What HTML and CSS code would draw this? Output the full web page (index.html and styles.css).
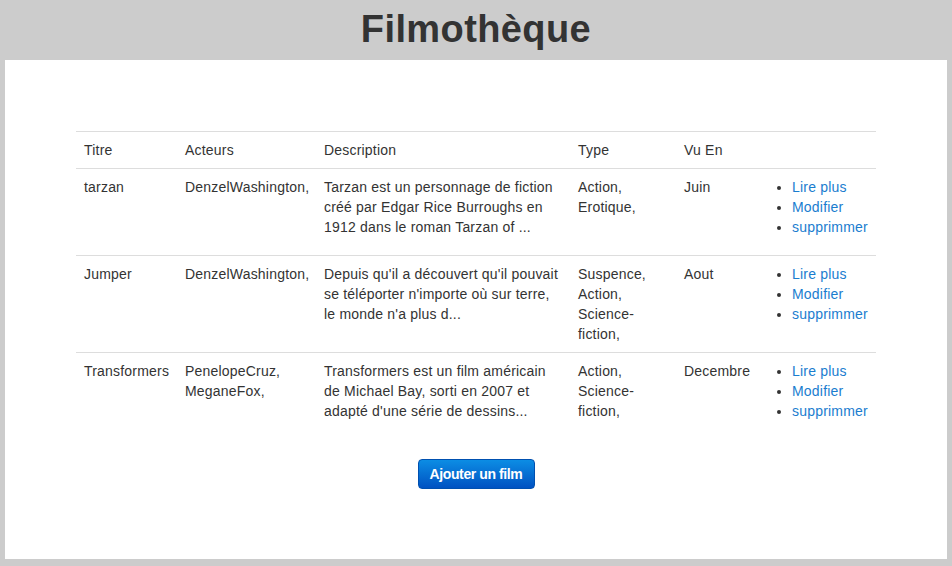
FILE: index.html
```html
<!DOCTYPE html>
<html lang="fr">
<head>
<meta charset="utf-8">
<title>Filmothèque</title>
<link rel="stylesheet" href="styles.css">
</head>
<body>
<header class="top">
  <h1 class="title">Filmothèque</h1>
</header>
<main class="panel">
  <table class="films">
    <colgroup>
      <col class="c-titre"><col class="c-acteurs"><col class="c-desc"><col class="c-type"><col class="c-vu"><col class="c-actions">
    </colgroup>
    <thead>
      <tr><th>Titre</th><th>Acteurs</th><th>Description</th><th>Type</th><th>Vu En</th><th></th></tr>
    </thead>
    <tbody>
      <tr>
        <td>tarzan</td>
        <td>DenzelWashington,</td>
        <td>Tarzan est un personnage de fiction créé par Edgar Rice Burroughs en 1912 dans le roman Tarzan of ...</td>
        <td>Action,<br>Erotique,</td>
        <td>Juin</td>
        <td><ul class="acts"><li><a href="#">Lire plus</a></li><li><a href="#">Modifier</a></li><li><a href="#">supprimmer</a></li></ul></td>
      </tr>
      <tr>
        <td>Jumper</td>
        <td>DenzelWashington,</td>
        <td>Depuis qu'il a découvert qu'il pouvait se téléporter n'importe où sur terre, le monde n'a plus d...</td>
        <td>Suspence,<br>Action,<br>Science-fiction,</td>
        <td>Aout</td>
        <td><ul class="acts"><li><a href="#">Lire plus</a></li><li><a href="#">Modifier</a></li><li><a href="#">supprimmer</a></li></ul></td>
      </tr>
      <tr>
        <td>Transformers</td>
        <td>PenelopeCruz,<br>MeganeFox,</td>
        <td>Transformers est un film américain de Michael Bay, sorti en 2007 et adapté d'une série de dessins...</td>
        <td>Action,<br>Science-fiction,</td>
        <td>Decembre</td>
        <td><ul class="acts"><li><a href="#">Lire plus</a></li><li><a href="#">Modifier</a></li><li><a href="#">supprimmer</a></li></ul></td>
      </tr>
    </tbody>
  </table>
  <div class="actions-bar">
    <a class="btn" href="#">Ajouter un film</a>
  </div>
</main>
</body>
</html>
```
FILE: styles.css
```css
html, body {
  margin: 0;
  padding: 0;
}
body {
  background: #cccccc;
  font-family: "Liberation Sans", Arial, Helvetica, sans-serif;
  font-size: 14px;
  line-height: 20px;
  color: #333333;
}
.top {
  height: 60px;
}
.title {
  margin: 0;
  text-align: center;
  font-size: 38px;
  line-height: 58px;
  font-weight: bold;
  color: #333333;
  letter-spacing: 0.4px;
}
.panel {
  background: #ffffff;
  margin: 0 5px;
  height: 499px;
  box-sizing: border-box;
  padding-top: 71px;
}
.films {
  width: 800px;
  margin: 0 auto 20px;
  border-collapse: collapse;
  table-layout: fixed;
  letter-spacing: 0.2px;
}
.c-titre { width: 101px; }
.c-acteurs { width: 139px; }
.c-desc { width: 254px; }
.c-type { width: 106px; }
.c-vu { width: 92px; }
.c-actions { width: 108px; }
.films th,
.films td {
  padding: 8px;
  text-align: left;
  vertical-align: top;
  border-top: 1px solid #dddddd;
}
.films th {
  font-weight: normal;
  border-bottom: 1px solid #dddddd;
}
.films tbody tr:first-child td {
  border-top: 0;
}
.acts {
  margin: 0 0 10px;
  padding-left: 16px;
}
.acts a {
  color: #1a7dcf;
  text-decoration: none;
}
.actions-bar {
  display: flex;
  justify-content: center;
}
.btn {
  display: inline-block;
  box-sizing: border-box;
  width: 117px;
  height: 30px;
  line-height: 28px;
  text-align: center;
  color: #ffffff;
  font-weight: bold;
  font-size: 14px;
  letter-spacing: -0.4px;
  text-decoration: none;
  border-radius: 4px;
  border: 1px solid #0050b0;
  background: linear-gradient(#0c8de4, #0052c2);
}
```
